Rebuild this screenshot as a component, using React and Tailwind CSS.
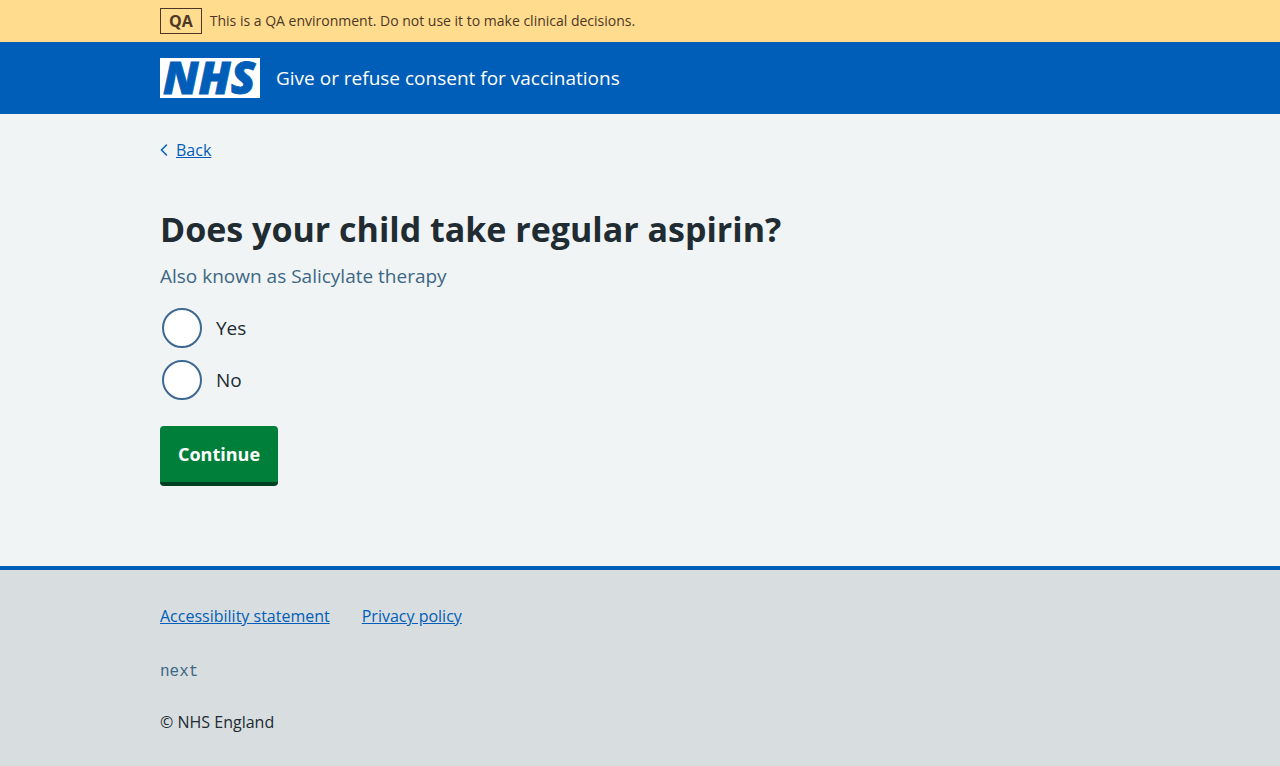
function Container({ className = '', children }) {
  return (
    <div className="px-4 lg:px-8">
      <div className={`mx-auto max-w-[960px] ${className}`}>{children}</div>
    </div>
  );
}

function Logo() {
  return (
    <svg viewBox="0 0 100 40" role="img" aria-label="NHS" className="h-10 w-[100px] shrink-0 overflow-visible">
      <rect width="100" height="40" fill="#fff" />
      <text
        x="3"
        y="36"
        fill="#005eb8"
        stroke="#005eb8"
        strokeWidth="0.8"
        fontFamily="'Open Sans', 'Noto Sans', sans-serif"
        fontSize="45"
        fontWeight="800"
        fontStyle="italic"
      >
        NHS
      </text>
    </svg>
  );
}

function Radio({ id, value, label }) {
  return (
    <div className="flex items-center gap-[14px] pl-[2px]">
      <input
        id={id}
        type="radio"
        name="aspirin"
        value={value}
        className="size-10 shrink-0 cursor-pointer appearance-none rounded-full border-2 border-[#3d6893] bg-white checked:bg-[#212b32] checked:bg-clip-content checked:p-2"
      />
      <label htmlFor={id} className="cursor-pointer text-[19px] leading-7">
        {label}
      </label>
    </div>
  );
}

export default function App() {
  return (
    <div className="flex min-h-screen flex-col bg-[#f0f4f5] font-['Open_Sans','Noto_Sans',sans-serif] font-medium text-[#212b32]">
      <div className="bg-[#ffdc8e] py-2 text-[#4d3726]">
        <Container className="flex items-center gap-2">
          <strong className="border border-[#4d3726] px-2 text-[16px] leading-6 font-bold">QA</strong>
          <span className="text-[14px] leading-6">
            This is a QA environment. Do not use it to make clinical decisions.
          </span>
        </Container>
      </div>

      <header className="bg-[#005eb8] py-4 text-white">
        <Container>
          <a href="#home" className="flex w-fit items-center gap-4">
            <Logo />
            <span className="text-[19px] leading-7">Give or refuse consent for vaccinations</span>
          </a>
        </Container>
      </header>

      <Container className="pt-6 pb-20">
        <a href="#back" className="flex w-fit items-center gap-2 text-[16px] leading-6 text-[#005eb8]">
          <svg viewBox="0 0 8 14" className="h-[14px] w-2" fill="none" stroke="currentColor" strokeWidth="1.5" strokeLinecap="round" aria-hidden="true">
            <path d="M6.5 2 1.5 7l5 5" />
          </svg>
          <span className="underline">Back</span>
        </a>

        <main className="pt-10">
          <form onSubmit={(event) => event.preventDefault()}>
            <fieldset aria-describedby="aspirin-hint">
              <legend className="mb-[6px]">
                <h1 className="text-[34px] leading-[54px] font-bold">Does your child take regular aspirin?</h1>
              </legend>
              <p id="aspirin-hint" className="mb-[18px] text-[19px] leading-7 text-[#3d6784]">
                Also known as Salicylate therapy
              </p>
              <div className="flex flex-col gap-3">
                <Radio id="aspirin-yes" value="yes" label="Yes" />
                <Radio id="aspirin-no" value="no" label="No" />
              </div>
            </fieldset>
            <button
              type="submit"
              className="mt-[26px] cursor-pointer rounded-[4px] border-b-4 border-[#004023] bg-[#007f3b] px-[18px] py-[14px] text-[18px] leading-7 font-bold text-white"
            >
              Continue
            </button>
          </form>
        </main>
      </Container>

      <footer className="flex-1 border-t-4 border-[#005eb8] bg-[#d8dde0] pt-[34px] pb-8 text-[16px] leading-6">
        <Container>
          <ul className="flex flex-wrap gap-x-8 gap-y-2">
            <li>
              <a href="#accessibility" className="text-[#005eb8] underline">Accessibility statement</a>
            </li>
            <li>
              <a href="#privacy" className="text-[#005eb8] underline">Privacy policy</a>
            </li>
          </ul>
          <p className="mt-8 font-['Liberation_Mono',monospace] text-[#3d6784]">next</p>
          <p className="mt-[26px]">© NHS England</p>
        </Container>
      </footer>
    </div>
  );
}
